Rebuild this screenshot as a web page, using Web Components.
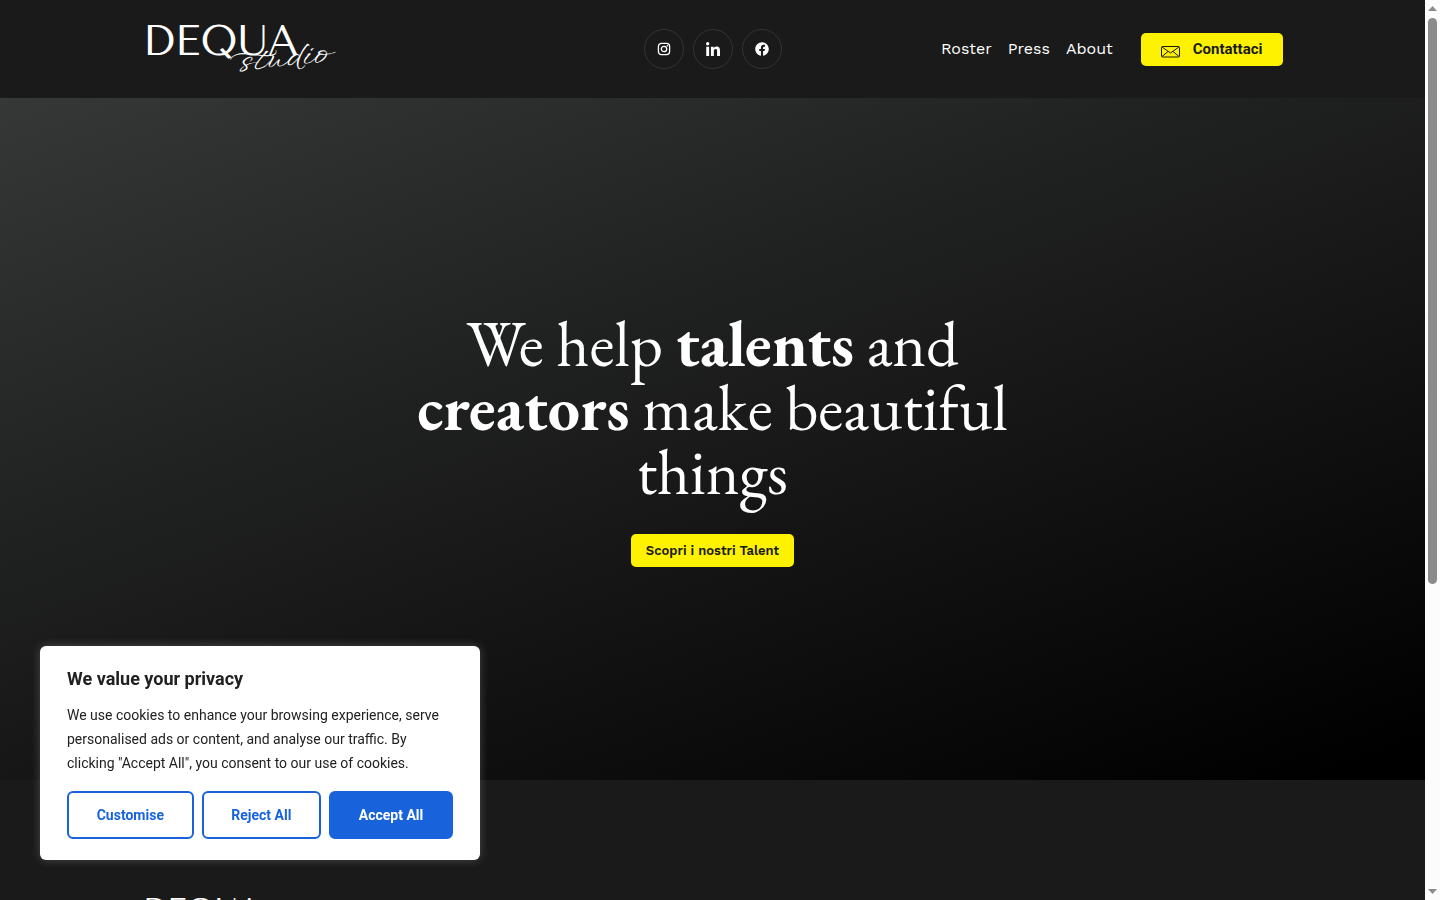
<!DOCTYPE html>
<html lang="it">
<head>
<meta charset="utf-8">
<meta name="viewport" content="width=device-width, initial-scale=1">
<title>DEQUA Studio</title>
<style>
    body {
        margin: 0;
        background: #1a1a1a;
        color: #fff;
        font-family: "Work Sans", "DejaVu Sans", "Noto Sans", sans-serif;
    }
</style>
</head>
<body>
<dq-page>
    <dq-header>
        <dq-logo slot="logo"></dq-logo>
        <dq-social slot="social" label="Instagram" icon="instagram"></dq-social>
        <dq-social slot="social" label="LinkedIn" icon="linkedin"></dq-social>
        <dq-social slot="social" label="Facebook" icon="facebook"></dq-social>
        <dq-nav-link slot="nav" href="#roster">Roster</dq-nav-link>
        <dq-nav-link slot="nav" href="#press">Press</dq-nav-link>
        <dq-nav-link slot="nav" href="#about">About</dq-nav-link>
        <dq-button slot="nav" class="contact" href="#contatti" icon>Contattaci</dq-button>
    </dq-header>
    <dq-hero>
        We help <b>talents</b> and <b>creators</b> make beautiful things
        <dq-button slot="action" href="#roster">Scopri i nostri Talent</dq-button>
    </dq-hero>
    <dq-footer><dq-logo small></dq-logo></dq-footer>
</dq-page>
<dq-consent></dq-consent>

<script>
const icons = {
    instagram: `<svg viewBox="0 0 14 14" width="14" height="14" fill="none" stroke="#fff" stroke-width="1.3">
        <rect x="1.4" y="1.4" width="11.2" height="11.2" rx="3"/>
        <circle cx="7" cy="7" r="2.7"/><circle cx="10.3" cy="3.8" r=".8" fill="#fff" stroke="none"/></svg>`,
    linkedin: `<svg viewBox="0 0 448 448" width="14" height="14" fill="#fff">
        <path d="M100 448H7V149h93zM54 108a54 54 0 1 1 0-108 54 54 0 0 1 0 108zM448 448h-93V302c0-35-1-79-48-79-49 0-56 38-56 77v148h-93V149h89v41h1c13-24 43-49 88-49 94 0 112 62 112 143z"/></svg>`,
    facebook: `<svg viewBox="0 0 512 512" width="14" height="14" fill="#fff">
        <path d="M504 256C504 119 393 8 256 8S8 119 8 256c0 124 91 226 209 245V328h-63v-72h63v-55c0-62 37-97 94-97 27 0 56 5 56 5v61h-32c-31 0-40 19-40 39v47h69l-11 72h-58v173c118-19 209-121 209-245z"/></svg>`,
    mail: `<svg viewBox="0 0 20 13" width="20" height="13" fill="none" stroke="#1a1a1a">
        <rect x=".5" y="1.5" width="18" height="10.5" rx="1"/>
        <path d="M1 2l8.5 6L18 2M1 11.5l6-5M18 11.5l-6-5"/></svg>`
};

class Page extends HTMLElement {
    constructor() {
        super();
        this.attachShadow({mode: 'open'});
        this.shadowRoot.innerHTML = `
            <style>
                :host {
                    display: grid;
                    grid-template-columns: minmax(0, 1fr) 15px;
                    height: 100vh;
                    overflow: hidden;
                }
                main {
                    overflow: hidden;
                }
                #rail {
                    display: flex;
                    flex-direction: column;
                    align-items: center;
                    justify-content: space-between;
                    background: #fcfcfc;
                    padding: 6px 0;
                }
                #track {
                    flex: 1;
                    width: 9px;
                    margin: 7px 0;
                }
                #thumb {
                    height: 65.5%;
                    border-radius: 5px;
                    background: #8b8b8b;
                }
                svg {
                    display: block;
                }
            </style>
            <main><slot></slot></main>
            <div id="rail" aria-hidden="true">
                <svg width="9" height="5" fill="#8b8b8b"><path d="M0 5L4.5 0 9 5z"/></svg>
                <div id="track"><div id="thumb"></div></div>
                <svg width="9" height="5" fill="#8b8b8b"><path d="M0 0h9L4.5 5z"/></svg>
            </div>
        `;
    }
}

class Header extends HTMLElement {
    constructor() {
        super();
        this.attachShadow({mode: 'open'});
        this.shadowRoot.innerHTML = `
            <style>
                :host {
                    display: block;
                    background: #1a1a1a;
                }
                header {
                    box-sizing: border-box;
                    width: 80%;
                    min-height: 98px;
                    margin: 0 auto;
                    display: grid;
                    grid-template-columns: 1fr auto 1fr;
                    align-items: center;
                }
                #social {
                    display: flex;
                    gap: 9px;
                }
                nav {
                    display: flex;
                    align-items: center;
                    justify-content: flex-end;
                    gap: 16px;
                }
                ::slotted(.contact) {
                    margin-left: 12px;
                }
            </style>
            <header>
                <slot name="logo"></slot>
                <div id="social"><slot name="social"></slot></div>
                <nav><slot name="nav"></slot></nav>
            </header>
        `;
    }
}

class Logo extends HTMLElement {
    constructor() {
        super();
        this.attachShadow({mode: 'open'});
        this.shadowRoot.innerHTML = `
            <style>
                :host {
                    display: block;
                }
                a {
                    position: relative;
                    display: block;
                    width: 192px;
                    height: 54px;
                    color: #fff;
                    text-decoration: none;
                }
                #name {
                    display: block;
                    font: 42px/38px "Tenor Sans", "Italiana", Lato, sans-serif;
                }
                #sub {
                    position: absolute;
                    right: 8px;
                    bottom: 0;
                    font: 36px/32px "WindSong", "Sacramento", cursive;
                    transform: rotate(-6deg);
                }
                :host([small]) #name {
                    font-size: 32px;
                    line-height: 28px;
                }
                :host([small]) #sub {
                    right: 40px;
                    font-size: 28px;
                }
            </style>
            <a href="#home"><span id="name">DEQUA</span><span id="sub">studio</span></a>
        `;
    }
}

class Social extends HTMLElement {
    constructor() {
        super();
        this.attachShadow({mode: 'open'});
        this.shadowRoot.innerHTML = `
            <style>
                :host {
                    display: block;
                }
                a {
                    box-sizing: border-box;
                    display: grid;
                    place-items: center;
                    width: 40px;
                    height: 40px;
                    border: 1px solid #333;
                    border-radius: 50%;
                }
            </style>
            <a href="#${this.getAttribute('icon')}" aria-label="${this.getAttribute('label')}">${icons[this.getAttribute('icon')]}</a>
        `;
    }
}

class NavLink extends HTMLElement {
    constructor() {
        super();
        this.attachShadow({mode: 'open'});
        this.shadowRoot.innerHTML = `
            <style>
                :host {
                    display: block;
                }
                a {
                    color: #fff;
                    font-size: 16px;
                    line-height: 24px;
                    text-decoration: none;
                }
            </style>
            <a href="${this.getAttribute('href')}"><slot></slot></a>
        `;
    }
}

class Button extends HTMLElement {
    constructor() {
        super();
        this.attachShadow({mode: 'open'});
        const icon = this.hasAttribute('icon');
        this.shadowRoot.innerHTML = `
            <style>
                :host {
                    display: block;
                }
                a {
                    box-sizing: border-box;
                    display: flex;
                    align-items: center;
                    height: 33px;
                    padding: 0 15px;
                    border-radius: 5px;
                    background: #fff200;
                    color: #1a1a1a;
                    font: 600 13px/21px "Work Sans", "Open Sans", sans-serif;
                    text-decoration: none;
                }
                a.icon {
                    gap: 12px;
                    padding: 0 20px;
                    font: 700 15px/20px Roboto, sans-serif;
                }
                svg {
                    margin-top: 4px;
                }
            </style>
            <a class="${icon ? 'icon' : ''}" href="${this.getAttribute('href')}">${icon ? icons.mail : ''}<span><slot></slot></span></a>
        `;
    }
}

class Hero extends HTMLElement {
    constructor() {
        super();
        this.attachShadow({mode: 'open'});
        this.shadowRoot.innerHTML = `
            <style>
                :host {
                    display: block;
                }
                section {
                    box-sizing: border-box;
                    min-height: 682px;
                    display: flex;
                    flex-direction: column;
                    align-items: center;
                    justify-content: center;
                    gap: 30px;
                    background: linear-gradient(160deg, #363837 0%, #1f2120 38%, #1a1a1a 50%, #000 97%);
                }
                h1 {
                    max-width: 640px;
                    margin: 0;
                    font: 400 64px/64px "EB Garamond", "Liberation Serif", serif;
                    text-align: center;
                }
            </style>
            <section>
                <h1><slot></slot></h1>
                <slot name="action"></slot>
            </section>
        `;
    }
}

class Footer extends HTMLElement {
    constructor() {
        super();
        this.attachShadow({mode: 'open'});
        this.shadowRoot.innerHTML = `
            <style>
                :host {
                    display: block;
                    background: #1a1a1a;
                }
                footer {
                    width: 80%;
                    margin: 0 auto;
                    padding: 116px 0 60px;
                }
            </style>
            <footer><slot></slot></footer>
        `;
    }
}

class Consent extends HTMLElement {
    constructor() {
        super();
        this.attachShadow({mode: 'open'});
        this.shadowRoot.innerHTML = `
            <style>
                :host {
                    position: fixed;
                    left: 40px;
                    bottom: 40px;
                    box-sizing: border-box;
                    width: 440px;
                    max-width: calc(100% - 80px);
                    padding: 21px 27px;
                    border-radius: 6px;
                    background: #fff;
                    box-shadow: 0 0 10px #acabab55;
                    color: #212121;
                    font: 14px/24px Roboto, sans-serif;
                }
                h2 {
                    margin: 0 0 12px;
                    font-size: 18px;
                    line-height: 24px;
                    font-weight: 700;
                }
                p {
                    margin: 0 0 16px;
                }
                #actions {
                    display: flex;
                    gap: 8px;
                }
                button {
                    flex: 1 1 auto;
                    height: 48px;
                    padding: 0 27px;
                    border: 2px solid #1863dc;
                    border-radius: 6px;
                    background: #fff;
                    color: #1863dc;
                    font: 700 14px/24px Roboto, sans-serif;
                }
                #accept {
                    background: #1863dc;
                    color: #fff;
                }
            </style>
            <h2>We value your privacy</h2>
            <p>We use cookies to enhance your browsing experience, serve personalised ads or content, and analyse our traffic. By clicking "Accept All", you consent to our use of cookies.</p>
            <div id="actions">
                <button type="button">Customise</button>
                <button type="button">Reject All</button>
                <button type="button" id="accept">Accept All</button>
            </div>
        `;
    }
}

customElements.define('dq-page', Page);
customElements.define('dq-header', Header);
customElements.define('dq-logo', Logo);
customElements.define('dq-social', Social);
customElements.define('dq-nav-link', NavLink);
customElements.define('dq-button', Button);
customElements.define('dq-hero', Hero);
customElements.define('dq-footer', Footer);
customElements.define('dq-consent', Consent);
</script>
</body>
</html>
